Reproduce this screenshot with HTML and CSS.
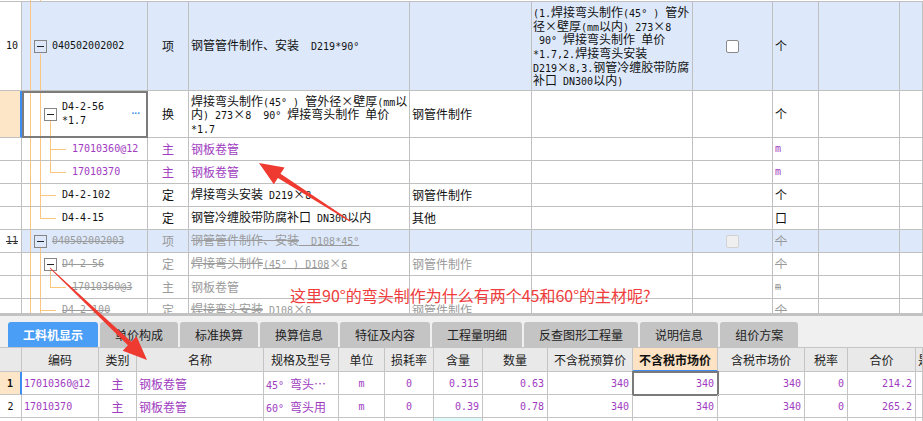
FILE: index.html
```html
<!DOCTYPE html>
<html lang="zh-CN">
<head>
<meta charset="utf-8">
<title>工料机</title>
<link rel="stylesheet" href="styles.css">
</head>
<body>
<div class="app">
  <div class="top">
    <div class="grid">
      <div class="row h89 blue">
        <div class="c num"><span class="m">10</span></div>
        <div class="c tree tr-a p12"><span class="box"></span><span class="m">040502002002</span></div>
        <div class="c ctr">项</div>
        <div class="c txt"><span class="t">钢管管件制作、安装<span class="m">  D219*90°</span></span></div>
        <div class="c"></div>
        <div class="c feat"><span class="t"><span class="tl"><span class="m">(1.</span>焊接弯头制作<span class="m">(45° ) </span>管外</span><span class="tl">径<span class="fw">×</span>壁厚<span class="m">(mm</span>以内<span class="m">) 273</span><span class="fw">×</span><span class="m">8</span></span><span class="tl"><span class="m"> 90° </span>焊接弯头制作<span class="m"> </span>单价</span><span class="tl"><span class="m">*1.7,2.</span>焊接弯头安装</span><span class="tl"><span class="m">D219</span><span class="fw">×</span><span class="m">8,3.</span>钢管冷缠胶带防腐</span><span class="tl">补口<span class="m"> DN300</span>以内<span class="m">)</span></span></span></div>
        <div class="c ctr"><span class="cb"></span></div>
        <div class="c txt">个</div>
        <div class="c"></div>
        <div class="c"></div>
      </div>
      <div class="row h47">
        <div class="c num selnum"></div>
        <div class="c tree tr-b p22 sel"><span class="box"></span><span class="t"><span class="tl m">D4-2-56</span><span class="tl m">*1.7</span></span><span class="dots">···</span></div>
        <div class="c ctr">换</div>
        <div class="c txt"><span class="t"><span class="tl">焊接弯头制作<span class="m">(45° ) </span>管外径<span class="fw">×</span>壁厚<span class="m">(mm</span>以</span><span class="tl">内<span class="m">) 273</span><span class="fw">×</span><span class="m">8  90° </span>焊接弯头制作<span class="m"> </span>单价</span><span class="tl"><span class="m">*1.7</span></span></span></div>
        <div class="c txt">钢管件制作</div>
        <div class="c"></div>
        <div class="c"></div>
        <div class="c txt">个</div>
        <div class="c"></div>
        <div class="c"></div>
      </div>
      <div class="row h23">
        <div class="c num"></div>
        <div class="c tree tr-c p28 leaf"><span class="ln"></span><span class="m pu">17010360@12</span></div>
        <div class="c ctr pu">主</div>
        <div class="c txt pu">钢板卷管</div>
        <div class="c"></div>
        <div class="c"></div>
        <div class="c"></div>
        <div class="c txt"><span class="m pu">m</span></div>
        <div class="c"></div>
        <div class="c"></div>
      </div>
      <div class="row h23">
        <div class="c num"></div>
        <div class="c tree tr-d p28 leaf"><span class="ln"></span><span class="m pu">17010370</span></div>
        <div class="c ctr pu">主</div>
        <div class="c txt pu">钢板卷管</div>
        <div class="c"></div>
        <div class="c"></div>
        <div class="c"></div>
        <div class="c txt"><span class="m pu">m</span></div>
        <div class="c"></div>
        <div class="c"></div>
      </div>
      <div class="row h23">
        <div class="c num"></div>
        <div class="c tree tr-e p18 leaf"><span class="ln"></span><span class="m">D4-2-102</span></div>
        <div class="c ctr">定</div>
        <div class="c txt"><span class="t">焊接弯头安装<span class="m"> D219</span><span class="fw">×</span><span class="m">8</span></span></div>
        <div class="c txt">钢管件制作</div>
        <div class="c"></div>
        <div class="c"></div>
        <div class="c txt">个</div>
        <div class="c"></div>
        <div class="c"></div>
      </div>
      <div class="row h23">
        <div class="c num"></div>
        <div class="c tree tr-f p18 leaf"><span class="ln"></span><span class="m">D4-4-15</span></div>
        <div class="c ctr">定</div>
        <div class="c txt"><span class="t">钢管冷缠胶带防腐补口<span class="m"> DN300</span>以内</span></div>
        <div class="c txt">其他</div>
        <div class="c"></div>
        <div class="c"></div>
        <div class="c txt">口</div>
        <div class="c"></div>
        <div class="c"></div>
      </div>
      <div class="row h23 blue">
        <div class="c num"><span class="m del dk">11</span></div>
        <div class="c tree tr-g p12"><span class="box"></span><span class="m gr del">040502002003</span></div>
        <div class="c ctr gr">项</div>
        <div class="c txt gr"><span class="t del">钢管管件制作、安装<span class="m">  D108*45°</span></span></div>
        <div class="c"></div>
        <div class="c"></div>
        <div class="c ctr"><span class="cb off"></span></div>
        <div class="c txt gr"><span class="del">个</span></div>
        <div class="c"></div>
        <div class="c"></div>
      </div>
      <div class="row h23">
        <div class="c num"></div>
        <div class="c tree tr-h p22"><span class="box"></span><span class="m gr del">D4-2-56</span></div>
        <div class="c ctr gr">定</div>
        <div class="c txt gr"><span class="t del">焊接弯头制作<span class="m">(45° ) D108</span><span class="fw">×</span><span class="m">6</span></span></div>
        <div class="c txt gr">钢管件制作</div>
        <div class="c"></div>
        <div class="c"></div>
        <div class="c txt gr"><span class="del">个</span></div>
        <div class="c"></div>
        <div class="c"></div>
      </div>
      <div class="row h23">
        <div class="c num"></div>
        <div class="c tree tr-i p28 leaf"><span class="ln"></span><span class="m gr del">17010360@3</span></div>
        <div class="c ctr gr">主</div>
        <div class="c txt gr">钢板卷管</div>
        <div class="c"></div>
        <div class="c"></div>
        <div class="c"></div>
        <div class="c txt gr"><span class="m del">m</span></div>
        <div class="c"></div>
        <div class="c"></div>
      </div>
      <div class="row h23">
        <div class="c num"></div>
        <div class="c tree tr-e p18 leaf"><span class="ln"></span><span class="m gr del">D4-2-100</span></div>
        <div class="c ctr gr">定</div>
        <div class="c txt gr"><span class="t del">焊接弯头安装<span class="m"> D108</span><span class="fw">×</span><span class="m">6</span></span></div>
        <div class="c txt gr">钢管件制作</div>
        <div class="c"></div>
        <div class="c"></div>
        <div class="c txt gr"><span class="del">个</span></div>
        <div class="c"></div>
        <div class="c"></div>
      </div>
    </div>
  </div>

  <div class="panel">
    <div class="tabs">
      <div class="tab on">工料机显示</div>
      <div class="tab">单价构成</div>
      <div class="tab">标准换算</div>
      <div class="tab">换算信息</div>
      <div class="tab">特征及内容</div>
      <div class="tab">工程量明细</div>
      <div class="tab">反查图形工程量</div>
      <div class="tab">说明信息</div>
      <div class="tab">组价方案</div>
    </div>
    <div class="bt">
      <div class="brow bh">
        <div class="b"></div>
        <div class="b">编码</div>
        <div class="b">类别</div>
        <div class="b">名称</div>
        <div class="b">规格及型号</div>
        <div class="b">单位</div>
        <div class="b">损耗率</div>
        <div class="b">含量</div>
        <div class="b">数量</div>
        <div class="b">不含税预算价</div>
        <div class="b hsel">不含税市场价</div>
        <div class="b">含税市场价</div>
        <div class="b">税率</div>
        <div class="b">合价</div>
        <div class="b l">是</div>
      </div>
      <div class="brow bd">
        <div class="b selnum"><span class="m bold">1</span></div>
        <div class="b l"><span class="m pu">17010360@12</span></div>
        <div class="b pu">主</div>
        <div class="b l pu">钢板卷管</div>
        <div class="b l pu"><span class="t"><span class="m">45° </span>弯头…</span></div>
        <div class="b"><span class="m pu">m</span></div>
        <div class="b"><span class="m pu">0</span></div>
        <div class="b r"><span class="m pu">0.315</span></div>
        <div class="b r"><span class="m pu">0.63</span></div>
        <div class="b r"><span class="m pu">340</span></div>
        <div class="b r dsel"><span class="m pu">340</span></div>
        <div class="b r"><span class="m pu">340</span></div>
        <div class="b r"><span class="m pu">0</span></div>
        <div class="b r"><span class="m pu">214.2</span></div>
        <div class="b"></div>
      </div>
      <div class="brow bd">
        <div class="b"><span class="m">2</span></div>
        <div class="b l"><span class="m pu">17010370</span></div>
        <div class="b pu">主</div>
        <div class="b l pu">钢板卷管</div>
        <div class="b l pu"><span class="t"><span class="m">60° </span>弯头用</span></div>
        <div class="b"><span class="m pu">m</span></div>
        <div class="b"><span class="m pu">0</span></div>
        <div class="b r"><span class="m pu">0.39</span></div>
        <div class="b r"><span class="m pu">0.78</span></div>
        <div class="b r"><span class="m pu">340</span></div>
        <div class="b r"><span class="m pu">340</span></div>
        <div class="b r"><span class="m pu">340</span></div>
        <div class="b r"><span class="m pu">0</span></div>
        <div class="b r"><span class="m pu">265.2</span></div>
        <div class="b"></div>
      </div>
      <div class="brow bd">
        <div class="b"></div><div class="b"></div><div class="b"></div><div class="b"></div><div class="b"></div><div class="b"></div><div class="b"></div>
        <div class="b cyan"></div>
        <div class="b"></div><div class="b"></div><div class="b"></div><div class="b"></div><div class="b"></div><div class="b"></div><div class="b"></div>
      </div>
    </div>
  </div>

  <div class="note">这里90°的弯头制作为什么有两个45和60°的主材呢?</div>
  <svg class="ov" width="923" height="421" viewBox="0 0 923 421" aria-hidden="true">
    <polygon fill="#ee3a30" points="350.3,220.6 280.5,173.8 284.6,167.5 259,163 273.8,184.3 277.9,178.0 349.7,221.4"/>
    <polygon fill="#ee3a30" points="49.66,268.36 127.9,345.3 122.7,350.8 147,360 136.5,336.2 131.3,341.7 50.34,267.64"/>
  </svg>
</div>
</body>
</html>
```

FILE: styles.css
```css
* { box-sizing: border-box; margin: 0; padding: 0; }
html, body { background: #fff; }
body {
  width: 923px;
  height: 421px;
  overflow: hidden;
  font-family: "Noto Sans CJK SC", "Noto Sans", sans-serif;
  font-size: 12px;
  color: #111;
}
.app {
  position: relative;
  width: 923px;
  height: 421px;
  overflow: hidden;
  --line: #c0c0c0;
  --tree: #fbc77e;
  --blue: #dde9fb;
  --purple: #a03cbf;
  --grey: #9a9a9a;
}

/* ---------- top tree grid ---------- */
.top {
  height: 313px;
  padding-top: 1px;
  overflow: hidden;
  background: linear-gradient(var(--tree), var(--tree)) 30px 0 / 1px 1px no-repeat,
              linear-gradient(var(--tree), var(--tree)) 40px 0 / 1px 1px no-repeat;
}
.grid { border-top: 1px solid var(--line); }
.row {
  display: grid;
  grid-template-columns: 22px 126px 41px 221px 122px 161px 80px 46px 81px 1fr;
}
.h89 { height: 89px; }
.h47 { height: 47px; }
.h23 { height: 23px; }
.c {
  display: flex;
  align-items: center;
  border-right: 1px solid var(--line);
  border-bottom: 1px solid var(--line);
  white-space: pre;
  overflow: hidden;
  line-height: 14px;
}
.t { display: block; }
.tl {
  display: block;
  height: 13.6px;
  line-height: 13.6px;
}
.blue .c { background-color: var(--blue); }
.blue .c.num { background-color: #fff; }
.num { padding-left: 6px; }
.ctr { justify-content: center; }
.txt { padding-left: 2px; }
.feat { padding-left: 1px; }

.m {
  font-family: "DejaVu Sans Mono", "Liberation Mono", monospace;
  font-size: 10px;
}
.fw {
  display: inline-block;
  width: 12px;
  text-align: center;
}
.pu { color: var(--purple); }
.gr, .gr .m { color: var(--grey); }
.gr.m { color: var(--grey); }
.del { text-decoration: line-through; }
.dk { color: #333; }
.bold { font-weight: bold; }

.selnum {
  background-color: #fde6c8;
  border-right: 2px solid #3d8ef0 !important;
}
.sel {
  outline: 2px solid #7c7c7c;
  outline-offset: -2px;
}

/* tree connectors */
.tree {
  --g: linear-gradient(var(--tree), var(--tree));
  background-repeat: no-repeat;
  gap: 5px;
}
.leaf { gap: 6px; }
.p12 { padding-left: 12px; }
.p18 { padding-left: 18px; }
.p22 { padding-left: 22px; }
.p28 { padding-left: 28px; }
.tr-a {
  background-image: var(--g), var(--g);
  background-position: 8px 0, 18px 100%;
  background-size: 1px 100%, 1px 36px;
}
.tr-b {
  background-image: var(--g), var(--g), var(--g);
  background-position: 8px 0, 18px 0, 28px 100%;
  background-size: 1px 100%, 1px 100%, 1px 16px;
}
.tr-c {
  background-image: var(--g), var(--g), var(--g);
  background-position: 8px 0, 18px 0, 28px 0;
  background-size: 1px 100%, 1px 100%, 1px 100%;
}
.tr-d {
  background-image: var(--g), var(--g), var(--g);
  background-position: 8px 0, 18px 0, 28px 0;
  background-size: 1px 100%, 1px 100%, 1px 11px;
}
.tr-e {
  background-image: var(--g), var(--g);
  background-position: 8px 0, 18px 0;
  background-size: 1px 100%, 1px 100%;
}
.tr-f {
  background-image: var(--g), var(--g);
  background-position: 8px 0, 18px 0;
  background-size: 1px 100%, 1px 11px;
}
.tr-g {
  background-image: var(--g), var(--g);
  background-position: 8px 0, 18px 100%;
  background-size: 1px 100%, 1px 4px;
}
.tr-h {
  background-image: var(--g), var(--g), var(--g);
  background-position: 8px 0, 18px 0, 28px 100%;
  background-size: 1px 100%, 1px 100%, 1px 4px;
}
.tr-i {
  background-image: var(--g), var(--g), var(--g);
  background-position: 8px 0, 18px 0, 28px 0;
  background-size: 1px 100%, 1px 100%, 1px 11px;
}
.box {
  flex: none;
  width: 13px;
  height: 13px;
  border: 1px solid #858585;
  display: flex;
  align-items: center;
  justify-content: center;
}
.box::before {
  content: "";
  width: 7px;
  height: 1px;
  background: #222;
}
.ln {
  flex: none;
  width: 16px;
  height: 1px;
  background: var(--tree);
}
.dots {
  margin-left: auto;
  margin-right: 7px;
  font-family: "Liberation Sans", sans-serif;
  font-size: 10px;
  font-weight: bold;
  letter-spacing: -0.5px;
  color: #3a8ee6;
}
.cb {
  width: 13px;
  height: 13px;
  border: 1px solid #8a8a8a;
  border-radius: 2px;
  background: #fff;
}
.cb.off {
  border-color: #d2d2d2;
  background: #efefef;
}

/* ---------- bottom panel ---------- */
.panel {
  height: 108px;
  background: #f0f0f0;
  border-top: 3px solid #c2c2c2;
}
.tabs {
  display: flex;
  gap: 2px;
  height: 31px;
  padding: 6px 0 0 8px;
}
.tab {
  height: 25px;
  line-height: 25px;
  padding: 0 15px;
  background: #c4c4c4;
  border-radius: 3px 3px 0 0;
  color: #222;
  white-space: nowrap;
}
.tab.on {
  background: #4a9ef6;
  color: #fff;
  font-weight: bold;
}
.bt {
  border-top: 1px solid #c4c4c4;
  background: #fff;
}
.brow {
  display: grid;
  grid-template-columns: 22px 77px 38px 127px 75px 46px 49px 49px 65px 85px 85px 87px 43px 68px 1fr;
}
.bh { height: 24px; }
.bd { height: 23px; }
.b {
  display: flex;
  align-items: center;
  justify-content: center;
  border-right: 1px solid #c4c4c4;
  border-bottom: 1px solid #c4c4c4;
  white-space: pre;
  overflow: hidden;
}
.bh .b { background: #e9e9e9; color: #222; }
.b.l { justify-content: flex-start; padding-left: 2px; }
.b.r { justify-content: flex-end; padding-right: 3px; }
.bh .hsel {
  background: #fde3c3;
  font-weight: bold;
  color: #111;
  border-bottom: 2px solid #3d8ef0;
}
.dsel {
  outline: 2px solid #7a7a7a;
  outline-offset: -1px;
}
.cyan { background: #e0fbfb; }

/* ---------- annotations ---------- */
.note {
  position: absolute;
  left: 290px;
  top: 285px;
  font-size: 16px;
  line-height: 20px;
  color: #f03c3c;
  white-space: nowrap;
}
.ov {
  position: absolute;
  left: 0;
  top: 0;
  pointer-events: none;
}
```
